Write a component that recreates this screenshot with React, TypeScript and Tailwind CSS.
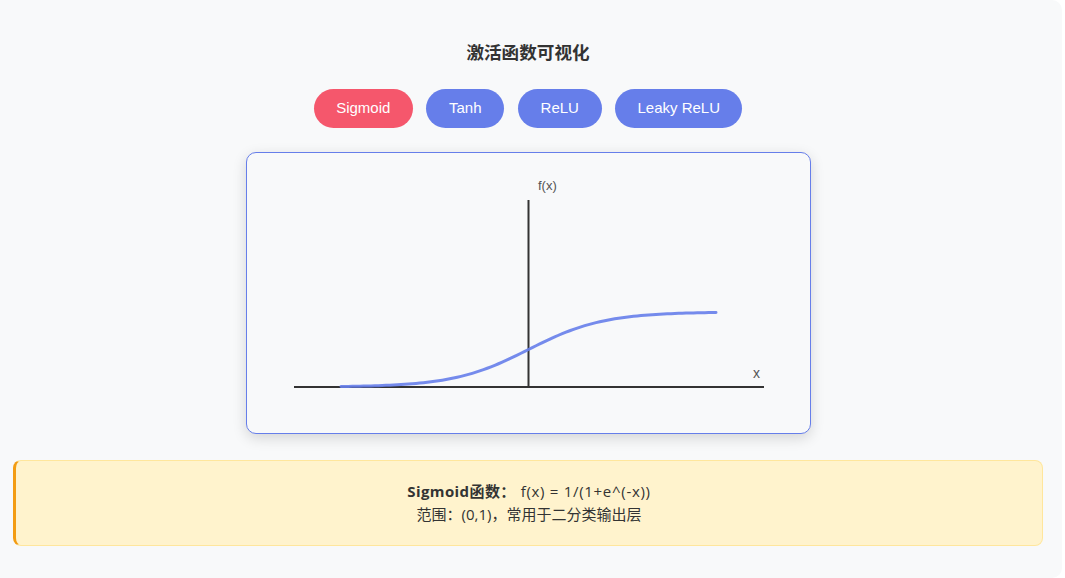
import React from "react";

const buttons = [
  { label: "Sigmoid", w: "w-[99px]", bg: "bg-[#f5576c]" },
  { label: "Tanh", w: "w-[78px]", bg: "bg-[#667eea]" },
  { label: "ReLU", w: "w-[84px]", bg: "bg-[#667eea]" },
  { label: "Leaky ReLU", w: "w-[127px]", bg: "bg-[#667eea]" },
];

function curvePath() {
  const pts: string[] = [];
  for (let i = 0; i <= 100; i++) {
    const t = -5 + i * 0.1;
    const px = 281.5 + t * 37.5;
    const py = 234 - 75 / (1 + Math.exp(-t));
    pts.push(`${i === 0 ? "M" : "L"}${px.toFixed(2)},${py.toFixed(2)}`);
  }
  return pts.join(" ");
}

export default function App() {
  return (
    <div
      className="w-[1065px] h-[578px] bg-white overflow-hidden"
      style={{ fontFamily: '"Liberation Sans", "Noto Sans CJK SC", sans-serif' }}
    >
      <div className="w-[1062px] h-[578px] bg-[#f8f9fa] rounded-r-[10px] pl-[13px] pr-[19px] pt-[38px] flex flex-col items-center">
        <h2
          className="text-[17.6px] leading-[27px] font-bold text-[#333]"
          style={{ fontFamily: '"Noto Sans CJK SC", sans-serif' }}
        >
          激活函数可视化
        </h2>
        <div className="mt-[24px] flex gap-[13.5px]">
          {buttons.map((b) => (
            <button
              key={b.label}
              className={`${b.w} ${b.bg} h-[39px] rounded-full text-white text-[15px] flex items-center justify-center`}
            >
              {b.label}
            </button>
          ))}
        </div>
        <div className="mt-[24px] w-[565px] h-[282px] border border-[#667eea] rounded-[10px] bg-[#f8f9fa] shadow-[0_4px_14px_rgba(0,0,0,0.15)]">
          <svg width="563" height="280" viewBox="0 0 563 280">
            <line x1="47" y1="234" x2="517" y2="234" stroke="#333" strokeWidth="2" />
            <line x1="281.5" y1="47" x2="281.5" y2="234" stroke="#333" strokeWidth="2" />
            <text x="291" y="37" fontSize="13" fill="#555" fontFamily="Liberation Sans, sans-serif">
              f(x)
            </text>
            <text x="506" y="225" fontSize="14" fill="#555" fontFamily="Liberation Sans, sans-serif">
              x
            </text>
            <path d={curvePath()} fill="none" stroke="#667eea" strokeWidth="3" strokeOpacity="0.9" strokeLinecap="round" />
          </svg>
        </div>
        <div
          className="mt-[26px] w-full h-[86px] bg-[#fff3cd] border border-[#ffe69c] border-l-[3px] border-l-[#f39c12] rounded-[8px] flex flex-col items-center justify-center text-[15px] leading-[23px] text-[#333]"
          style={{ fontFamily: '"Open Sans", "Noto Sans CJK SC", sans-serif' }}
        >
          <div>
            <span className="font-bold tracking-[0.4px]">Sigmoid函数：</span>
            <span className="ml-[5px] tracking-[0.7px]">f(x) = 1/(1+e^(-x))</span>
          </div>
          <div>范围：(0,1)，常用于二分类输出层</div>
        </div>
      </div>
    </div>
  );
}
